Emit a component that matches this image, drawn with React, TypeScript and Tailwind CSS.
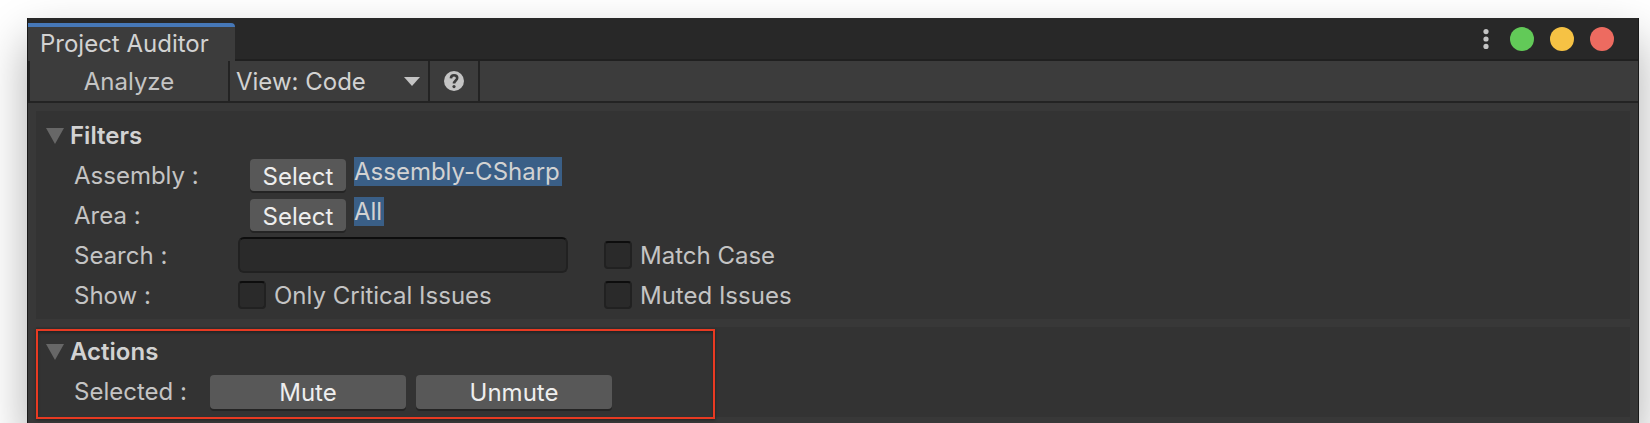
import type { ReactNode } from "react";

const raised =
  "rounded-[4px] bg-[#585858] pt-0.5 text-[#eeeeee] shadow-[0_2px_0_#242424] hover:bg-[#676767]";
const sunken =
  "border-2 border-[#212121] border-t-[#0d0d0d] bg-[#2a2a2a] outline-none";

function Foldout({ title }: { title: string }) {
  return (
    <button type="button" className="flex h-10 items-center gap-1.5 pt-0.5 pl-2.5 font-semibold text-[#d2d2d2]">
      <svg viewBox="0 0 18 16" className="h-4 w-[18px]" aria-hidden="true">
        <path d="M0 0H18L9 16Z" fill="#676767" />
      </svg>
      <h2>{title}</h2>
    </button>
  );
}

function Row({ label, children }: { label: ReactNode; children: ReactNode }) {
  return (
    <div className="flex h-10 items-center pl-[38px]">
      <div className="w-[164px] shrink-0 pt-0.5">{label}</div>
      {children}
    </div>
  );
}

function SelectRow({ label, value }: { label: string; value: string }) {
  return (
    <Row label={label}>
      <button type="button" className={`ml-3 h-8 w-24 shrink-0 ${raised}`}>
        Select
      </button>
      <span className="mt-0.5 ml-2 self-start bg-[#3a5f87] pr-0.5 leading-[29px] text-[#d2d2d2]">
        {value}
      </span>
    </Row>
  );
}

function Toggle({ label }: { label: string }) {
  return (
    <label className="flex items-center gap-2 whitespace-nowrap">
      <input type="checkbox" className={`size-7 appearance-none rounded-[4px] checked:bg-[#585858] ${sunken}`} />
      <span className="pt-0.5">{label}</span>
    </label>
  );
}

export default function App() {
  return (
    <div className="h-screen overflow-hidden bg-white pt-[18px] pr-[11px] pl-[27px] font-['Inter',sans-serif] text-2xl leading-8 text-[#c4c4c4]">
      <main className="min-h-full border border-t-0 border-[#1a1a1a] bg-[#383838] shadow-[0_22px_44px_rgba(0,0,0,0.32)]">
        <header className="flex h-[43px] items-stretch justify-between border-b-2 border-[#202020] bg-[#282828]">
          <div className="-mb-0.5 flex pt-[5px]">
            <h1 className="flex w-[207px] items-center rounded-tr-[4px] border-t-4 border-[#4678b8] bg-[#3c3c3c] pl-3 text-[#d2d2d2]">
              Project Auditor
            </h1>
          </div>
          <div className="flex items-center gap-4 pr-6">
            <button type="button" aria-label="Menu">
              <svg viewBox="0 0 8 20" className="h-5 w-2" fill="#c4c4c4" aria-hidden="true">
                <circle cx="4" cy="2.6" r="2.6" />
                <circle cx="4" cy="10" r="2.6" />
                <circle cx="4" cy="17.4" r="2.6" />
              </svg>
            </button>
            <div className="flex gap-4 pl-1">
              <button type="button" aria-label="Minimize" className="size-6 rounded-full bg-[#62ca58]" />
              <button type="button" aria-label="Maximize" className="size-6 rounded-full bg-[#f6c244]" />
              <button type="button" aria-label="Close" className="size-6 rounded-full bg-[#ed6b60]" />
            </div>
          </div>
        </header>

        <nav className="flex h-[42px] border-b-2 border-[#232323] bg-[#3c3c3c]">
          <button type="button" className="w-[202px] border-x-2 border-[#232323] pt-0.5">
            Analyze
          </button>
          <div className="grid w-[200px] items-center border-r-2 border-[#232323]">
            <select aria-label="View" className="col-start-1 row-start-1 h-10 w-full appearance-none bg-transparent pt-0.5 pl-1.5 text-[#d2d2d2] outline-none">
              <option>View: Code</option>
            </select>
            <svg viewBox="0 0 14 9" className="pointer-events-none col-start-1 row-start-1 mr-2 h-[9px] w-4 justify-self-end" preserveAspectRatio="none" aria-hidden="true">
              <path d="M0 0H14L7 9Z" fill="#c4c4c4" />
            </svg>
          </div>
          <button type="button" aria-label="Help" className="flex w-[50px] items-center justify-center border-r-2 border-[#232323]">
            <svg viewBox="0 0 20 20" className="size-5" aria-hidden="true">
              <circle cx="10" cy="10" r="10" fill="#c4c4c4" />
              <path d="M6.9 7.4C7 5.2 8.2 4.2 10 4.2C11.8 4.2 13.2 5.3 13.2 7C13.2 9.4 10 9.6 10 12.6" fill="none" stroke="#3c3c3c" strokeWidth="2.6" />
              <circle cx="10" cy="15.6" r="1.6" fill="#3c3c3c" />
            </svg>
          </button>
        </nav>

        <div className="flex flex-col gap-2 p-2">
          <section className="bg-[#333333] py-1">
            <Foldout title="Filters" />
            <SelectRow label="Assembly :" value="Assembly-CSharp" />
            <SelectRow label="Area :" value="All" />
            <Row label={<label htmlFor="search">Search :</label>}>
              <input id="search" type="text" className={`mr-9 h-9 w-[330px] rounded-[6px] px-1 ${sunken}`} />
              <Toggle label="Match Case" />
            </Row>
            <Row label="Show :">
              <div className="w-[366px]">
                <Toggle label="Only Critical Issues" />
              </div>
              <Toggle label="Muted Issues" />
            </Row>
          </section>

          <section className="relative bg-[#333333] py-1">
            <Foldout title="Actions" />
            <div className="flex h-[42px] items-center pl-[38px]">
              <div className="w-[136px]">Selected :</div>
              <div className="flex gap-2.5">
                <button type="button" className={`h-[34px] w-[196px] ${raised}`}>
                  Mute
                </button>
                <button type="button" className={`h-[34px] w-[196px] ${raised}`}>
                  Unmute
                </button>
              </div>
            </div>
            <div className="pointer-events-none absolute top-0.5 -bottom-0.5 left-0 w-[679px] border-2 border-[#e83a22] shadow-[0_1px_3px_rgba(0,0,0,0.4),inset_0_2px_3px_rgba(0,0,0,0.3)]" />
          </section>
        </div>
      </main>
    </div>
  );
}
